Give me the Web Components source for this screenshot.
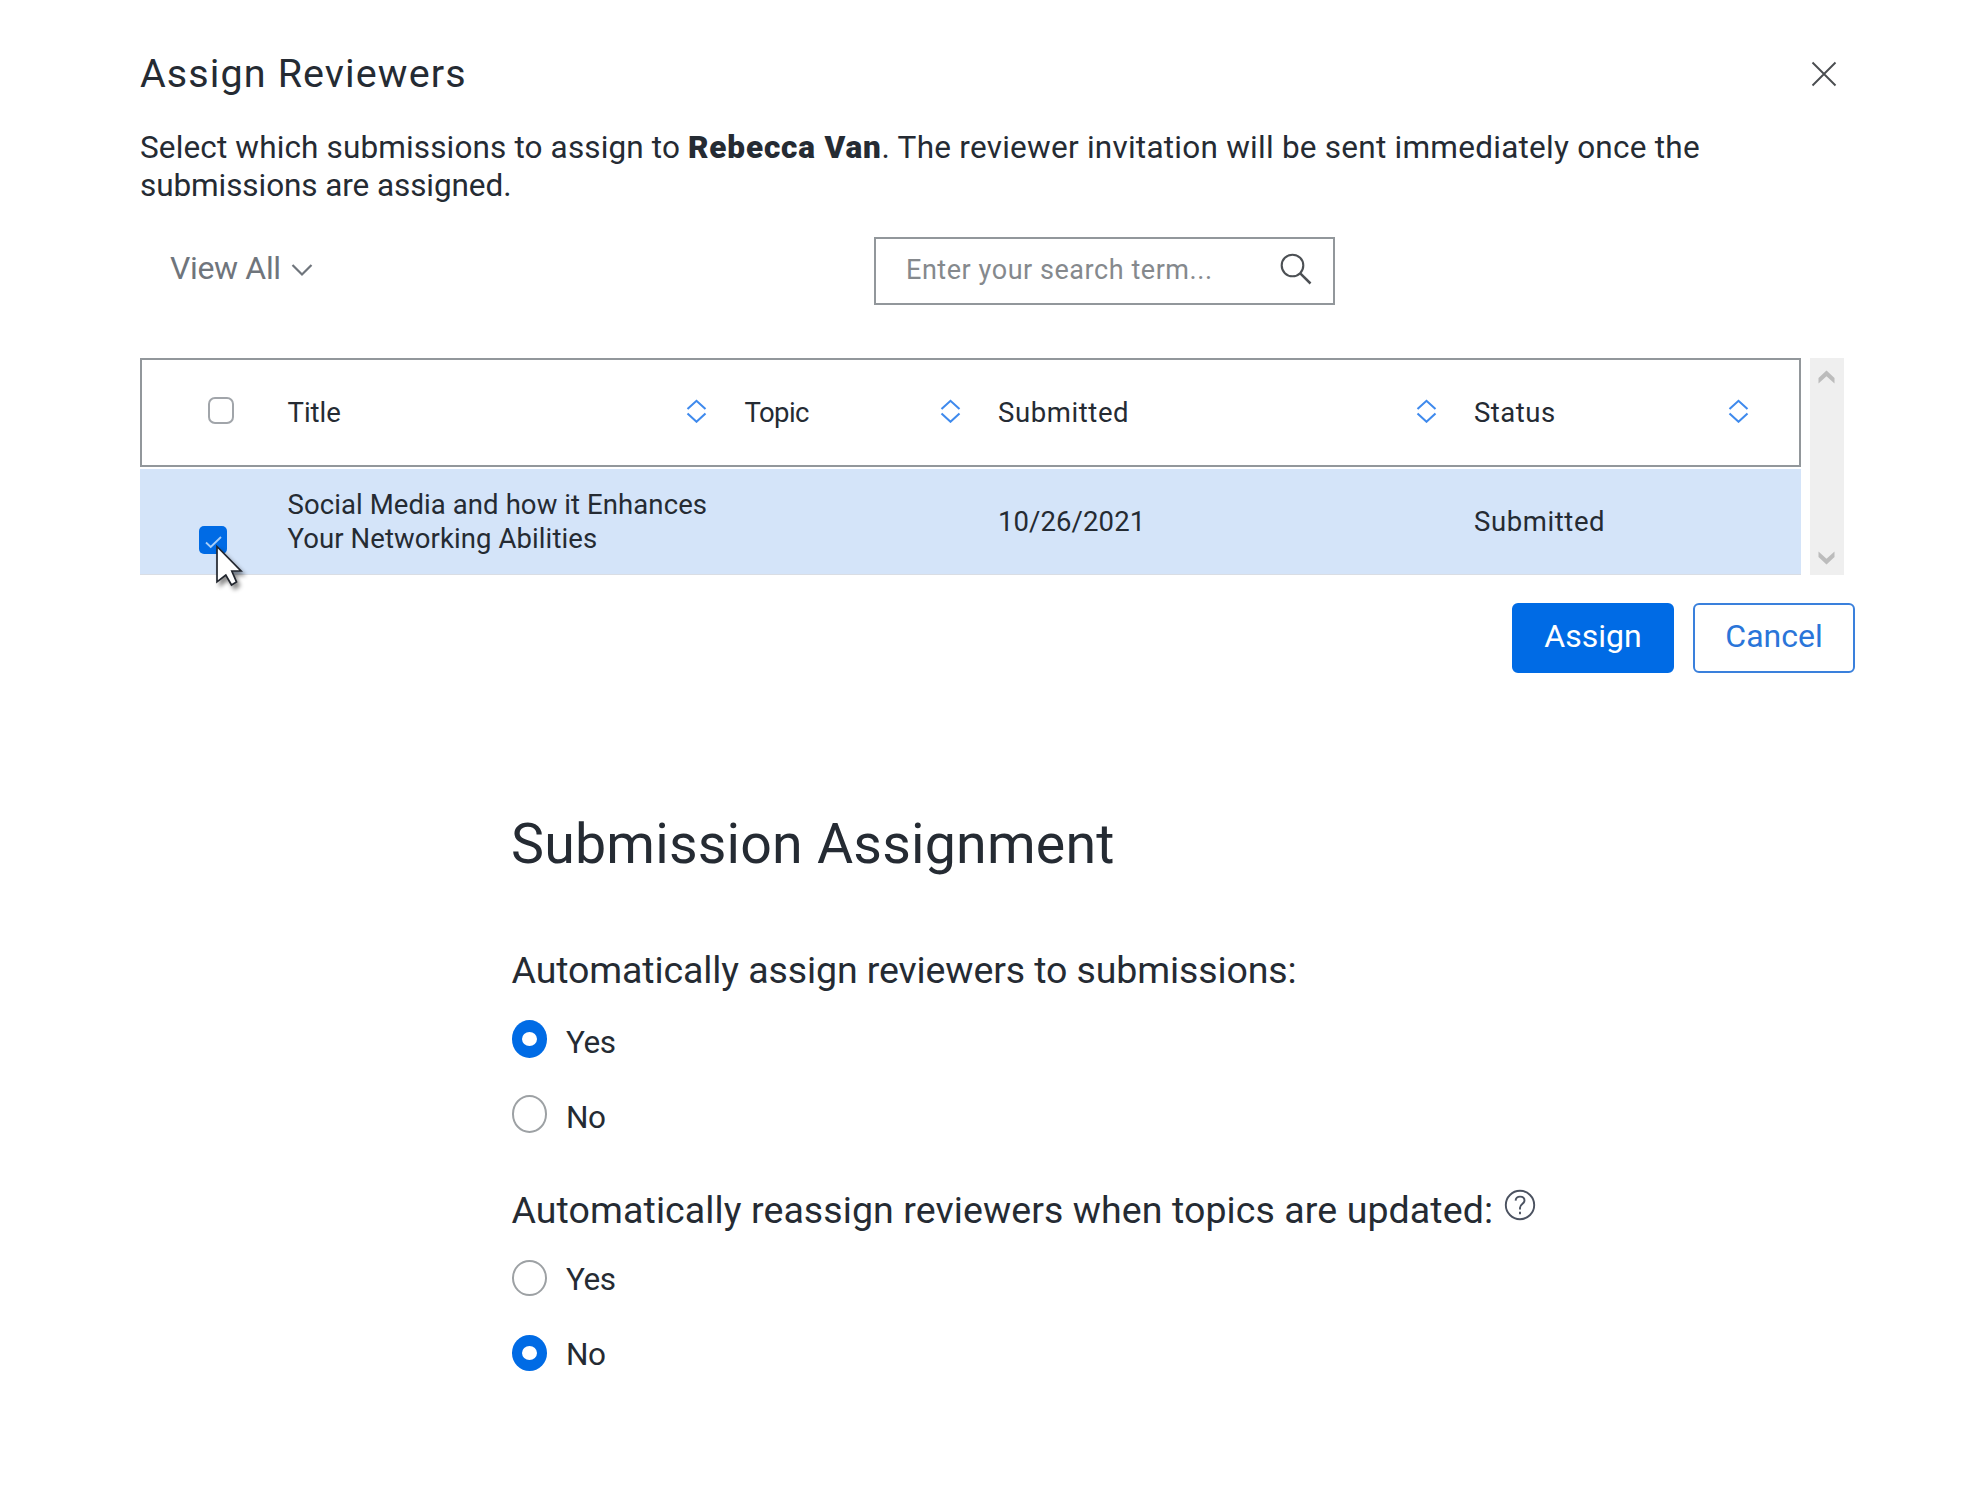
<!DOCTYPE html>
<html lang="en">
<head>
<meta charset="utf-8">
<title>Assign Reviewers</title>
<style>
    body {
        --text-color: #252b33;
        --muted-color: #6f757c;
        --border-color: #92979b;
        --primary-color: #006be5;
        --row-selected: #d4e4f9;
        margin: 0;
        background: #fff;
        color: var(--text-color);
        font-family: Roboto, "Liberation Sans", sans-serif;
    }
    setting-group + setting-group {
        margin-top: 55px;
    }
</style>
</head>
<body>

<assign-dialog>
    <span slot="title">Assign Reviewers</span>
    <search-bar slot="tools" filter="View All" placeholder="Enter your search term..."></search-bar>
    <submission-table slot="table"></submission-table>
    <action-button slot="actions" primary>Assign</action-button>
    <action-button slot="actions">Cancel</action-button>
</assign-dialog>

<settings-section heading="Submission Assignment">
    <setting-group style="--radio-height: 38px; --radio-gap: 37px; --label-drop: 8px; --legend-spacing: -0.11px">
        <span slot="legend">Automatically assign reviewers to submissions:</span>
        <radio-option checked>Yes</radio-option>
        <radio-option>No</radio-option>
    </setting-group>
    <setting-group help style="--radio-height: 36px; --radio-gap: 39px; --label-drop: 3px; --legend-spacing: 0.09px">
        <span slot="legend">Automatically reassign reviewers when topics are updated:</span>
        <radio-option>Yes</radio-option>
        <radio-option checked>No</radio-option>
    </setting-group>
</settings-section>

<script>
    class AssignDialog extends HTMLElement {
        constructor() {
            super();
            this.attachShadow({ mode: 'open' });
            this.shadowRoot.innerHTML = `
                <style>
                    :host {
                        display: block;
                        padding: 50px 131px 0 140px;
                    }
                    header {
                        display: flex;
                        justify-content: space-between;
                        align-items: center;
                        height: 48px;
                        padding-right: 18px;
                    }
                    h2 {
                        margin: 0;
                        font-size: 39.5px;
                        line-height: 48px;
                        font-weight: 400;
                        letter-spacing: 1.1px;
                    }
                    p {
                        margin: 30.5px 0 31.5px;
                        font-size: 31.5px;
                        line-height: 38.4px;
                        white-space: nowrap;
                        letter-spacing: 0.14px;
                    }
                    b {
                        font-weight: 900;
                        letter-spacing: 0.82px;
                    }
                    .rest {
                        letter-spacing: 0.25px;
                    }
                    .last {
                        letter-spacing: -0.08px;
                    }
                    .table {
                        margin-top: 53px;
                    }
                    footer {
                        display: flex;
                        justify-content: flex-end;
                        gap: 19px;
                        margin-top: 28px;
                    }
                </style>
                <header>
                    <h2><slot name="title"></slot></h2>
                    <svg width="26" height="26" viewBox="0 0 26 26" fill="none" stroke="#4a4d50" stroke-width="1.9">
                        <path d="M1.5 1.5L24.5 24.5M24.5 1.5L1.5 24.5"/>
                    </svg>
                </header>
                <p>Select which submissions to assign to <b>Rebecca Van</b><span class="rest">. The reviewer invitation will be sent immediately once the</span><br><span class="last">submissions are assigned.</span></p>
                <slot name="tools"></slot>
                <div class="table"><slot name="table"></slot></div>
                <footer><slot name="actions"></slot></footer>
            `;
        }
    }

    class SearchBar extends HTMLElement {
        connectedCallback() {
            this.attachShadow({ mode: 'open' });
            this.shadowRoot.innerHTML = `
                <style>
                    :host {
                        display: grid;
                        grid-template-columns: 734px 461px;
                        height: 68px;
                    }
                    .filter {
                        display: flex;
                        align-items: center;
                        gap: 10px;
                        padding: 0 0 6px 30px;
                        color: var(--muted-color);
                        font-size: 32px;
                        letter-spacing: -0.35px;
                    }
                    .filter svg {
                        margin-top: 4px;
                    }
                    .box {
                        display: flex;
                        justify-content: space-between;
                        align-items: center;
                        box-sizing: border-box;
                        padding: 0 21px 3px 30px;
                        border: 2px solid var(--border-color);
                        color: #85898d;
                        font-size: 27px;
                        letter-spacing: 0.55px;
                    }
                    .box span {
                        padding-top: 2px;
                    }
                </style>
                <div class="filter">
                    <span>${this.getAttribute('filter')}</span>
                    <svg width="22" height="14" viewBox="0 0 22 14" fill="none" stroke="currentColor" stroke-width="2.2">
                        <path d="M1.5 2L11 11.5L20.5 2"/>
                    </svg>
                </div>
                <div class="box">
                    <span>${this.getAttribute('placeholder')}</span>
                    <svg width="32" height="32" viewBox="0 0 32 32" fill="none" stroke="#4c5054" stroke-width="2.1">
                        <circle cx="12.5" cy="12.5" r="10.8"/>
                        <path d="M20 20.2L30.5 30.5" stroke-width="2.5"/>
                    </svg>
                </div>
            `;
        }
    }

    class SubmissionTable extends HTMLElement {
        connectedCallback() {
            this.attachShadow({ mode: 'open' });
            const columns = [
                { name: 'Title', spacing: 0 },
                { name: 'Topic', spacing: -0.6 },
                { name: 'Submitted', spacing: 0.6 },
                { name: 'Status', spacing: 0.5 }
            ];
            const headings = columns.map(col => `
                <div class="heading">
                    <span style="letter-spacing: ${col.spacing}px">${col.name}</span>
                    <svg width="21" height="24" viewBox="0 0 21 24" fill="none" stroke="#3f8aed" stroke-width="2.1">
                        <path d="M1.5 10L10.5 1.8L19.5 10M1.5 14.5L10.5 22.7L19.5 14.5"/>
                    </svg>
                </div>
            `).join('');

            this.shadowRoot.innerHTML = `
                <style>
                    :host {
                        display: flex;
                        gap: 9px;
                        height: 217px;
                        font-size: 27.5px;
                        line-height: 34px;
                        letter-spacing: 0.09px;
                    }
                    .rows {
                        width: 1661px;
                    }
                    .head, .row {
                        display: grid;
                        grid-template-columns: 147.5px 457px 253.5px 476px 1fr;
                        align-items: center;
                        box-sizing: border-box;
                    }
                    .head {
                        height: 109px;
                        border: 2px solid var(--border-color);
                        grid-template-columns: 145.5px 457px 253.5px 476px 1fr;
                    }
                    .row {
                        height: 106px;
                        margin-top: 2px;
                        padding-top: 2px;
                        background: var(--row-selected);
                        border-bottom: 1px solid #d9dde4;
                    }
                    .heading {
                        display: flex;
                        justify-content: space-between;
                        align-items: center;
                        padding: 2px 37.5px 0 0;
                    }
                    .heading:last-child {
                        padding-right: 50.5px;
                    }
                    .heading svg {
                        margin-top: -5px;
                    }
                    .check {
                        box-sizing: border-box;
                        width: 26px;
                        height: 27px;
                        margin: -4px 0 0 65.5px;
                        border: 2px solid #a1a5aa;
                        border-radius: 7px;
                    }
                    .checked {
                        position: relative;
                        align-self: start;
                        width: 28px;
                        height: 28px;
                        margin: 55px 0 0 59px;
                        border-radius: 5px;
                        background: var(--primary-color);
                    }
                    .checked svg {
                        display: block;
                    }
                    /* the pointer sits on top of the ticked box */
                    .checked .pointer {
                        position: absolute;
                        left: 16px;
                        top: 18px;
                        filter: drop-shadow(3px 4px 2px rgba(0, 0, 0, 0.45));
                    }
                    .wide {
                        letter-spacing: 0.6px;
                    }
                    .scroll {
                        display: flex;
                        flex-direction: column;
                        justify-content: space-between;
                        align-items: center;
                        box-sizing: border-box;
                        width: 34px;
                        padding: 12px 2px 10px 0;
                        background: #efefef;
                    }
                </style>
                <div class="rows">
                    <div class="head">
                        <div class="check"></div>
                        ${headings}
                    </div>
                    <div class="row">
                        <div class="checked">
                            <svg width="28" height="28" viewBox="0 0 28 28" fill="none" stroke="#a9cff8" stroke-width="1.8">
                                <path d="M7 16.5L11.7 21L22 11"/>
                            </svg>
                            <svg class="pointer" width="30" height="46" viewBox="0 0 30 46" fill="#fff" stroke="#22262e" stroke-width="1.7">
                                <path d="M2 2.5L26 27H16.8L21.5 38L16.5 41L10.8 31L2 37.8Z"/>
                            </svg>
                        </div>
                        <div>Social Media and how it Enhances<br>Your Networking Abilities</div>
                        <div></div>
                        <div>10/26/2021</div>
                        <div class="wide">Submitted</div>
                    </div>
                </div>
                <div class="scroll">
                    <svg width="17" height="15" viewBox="0 0 17 15" fill="#bcbcbc"><path d="M0.5 8L8.5 0.5L16.5 8V13.5L8.5 6.2L0.5 13.5Z"/></svg>
                    <svg width="17" height="15" viewBox="0 0 17 15" fill="#bcbcbc"><path d="M0.5 7L8.5 14.5L16.5 7V1.5L8.5 8.8L0.5 1.5Z"/></svg>
                </div>
            `;
        }
    }

    class ActionButton extends HTMLElement {
        constructor() {
            super();
            this.attachShadow({ mode: 'open' });
            this.shadowRoot.innerHTML = `
                <style>
                    :host {
                        display: flex;
                        justify-content: center;
                        align-items: center;
                        box-sizing: border-box;
                        width: 162px;
                        height: 70px;
                        padding-bottom: 3px;
                        border: 2px solid #3a80dc;
                        border-radius: 6px;
                        color: #2a75d9;
                        font-size: 32px;
                    }
                    :host([primary]) {
                        border-color: var(--primary-color);
                        background: var(--primary-color);
                        color: #fff;
                    }
                </style>
                <slot></slot>
            `;
        }
    }

    class SettingsSection extends HTMLElement {
        connectedCallback() {
            this.attachShadow({ mode: 'open' });
            this.shadowRoot.innerHTML = `
                <style>
                    :host {
                        display: block;
                        padding: 139px 0 0 511.5px;
                    }
                    h1 {
                        margin: 0 0 70px -0.5px;
                        font-size: 55.5px;
                        line-height: 66px;
                        font-weight: 400;
                        letter-spacing: 0.2px;
                    }
                </style>
                <h1>${this.getAttribute('heading')}</h1>
                <slot></slot>
            `;
        }
    }

    class SettingGroup extends HTMLElement {
        connectedCallback() {
            this.attachShadow({ mode: 'open' });
            // question mark in a circle, only for groups that have a help text
            const help = this.hasAttribute('help') ? `
                <svg width="32" height="32" viewBox="0 0 32 32" fill="none" stroke="#4b5260" stroke-width="1.9">
                    <circle cx="16" cy="16" r="14.2"/>
                    <path d="M11.6 11.6C11.8 8.9 13.6 7.6 16.1 7.6C18.8 7.6 20.5 9.2 20.5 11.5C20.5 15 16 15.2 16 18.8V20.4M16 22.8V25.2"/>
                </svg>` : '';
            this.shadowRoot.innerHTML = `
                <style>
                    :host {
                        display: block;
                    }
                    .legend {
                        display: flex;
                        align-items: center;
                        gap: 11px;
                        height: 44px;
                        margin-bottom: 28px;
                        font-size: 37.5px;
                        line-height: 44px;
                        letter-spacing: var(--legend-spacing);
                    }
                    .legend svg {
                        margin-top: -9px;
                    }
                    .options {
                        display: flex;
                        flex-direction: column;
                        gap: var(--radio-gap);
                    }
                </style>
                <div class="legend"><slot name="legend"></slot>${help}</div>
                <div class="options"><slot></slot></div>
            `;
        }
    }

    class RadioOption extends HTMLElement {
        constructor() {
            super();
            this.attachShadow({ mode: 'open' });
            this.shadowRoot.innerHTML = `
                <style>
                    :host {
                        display: flex;
                        align-items: center;
                        gap: 19px;
                        height: var(--radio-height);
                        font-size: 31.5px;
                        letter-spacing: -0.4px;
                    }
                    .dot {
                        display: flex;
                        justify-content: center;
                        align-items: center;
                        box-sizing: border-box;
                        width: 35.5px;
                        height: 100%;
                        border: 2px solid #9da1a4;
                        border-radius: 50%;
                    }
                    :host([checked]) .dot {
                        border: 0;
                        background: var(--primary-color);
                    }
                    :host([checked]) .dot::after {
                        content: "";
                        width: 15px;
                        height: 14px;
                        border-radius: 50%;
                        background: #fff;
                    }
                    .label {
                        padding-top: var(--label-drop);
                    }
                </style>
                <div class="dot"></div>
                <div class="label"><slot></slot></div>
            `;
        }
    }

    customElements.define('assign-dialog', AssignDialog);
    customElements.define('search-bar', SearchBar);
    customElements.define('submission-table', SubmissionTable);
    customElements.define('action-button', ActionButton);
    customElements.define('settings-section', SettingsSection);
    customElements.define('setting-group', SettingGroup);
    customElements.define('radio-option', RadioOption);
</script>
</body>
</html>
